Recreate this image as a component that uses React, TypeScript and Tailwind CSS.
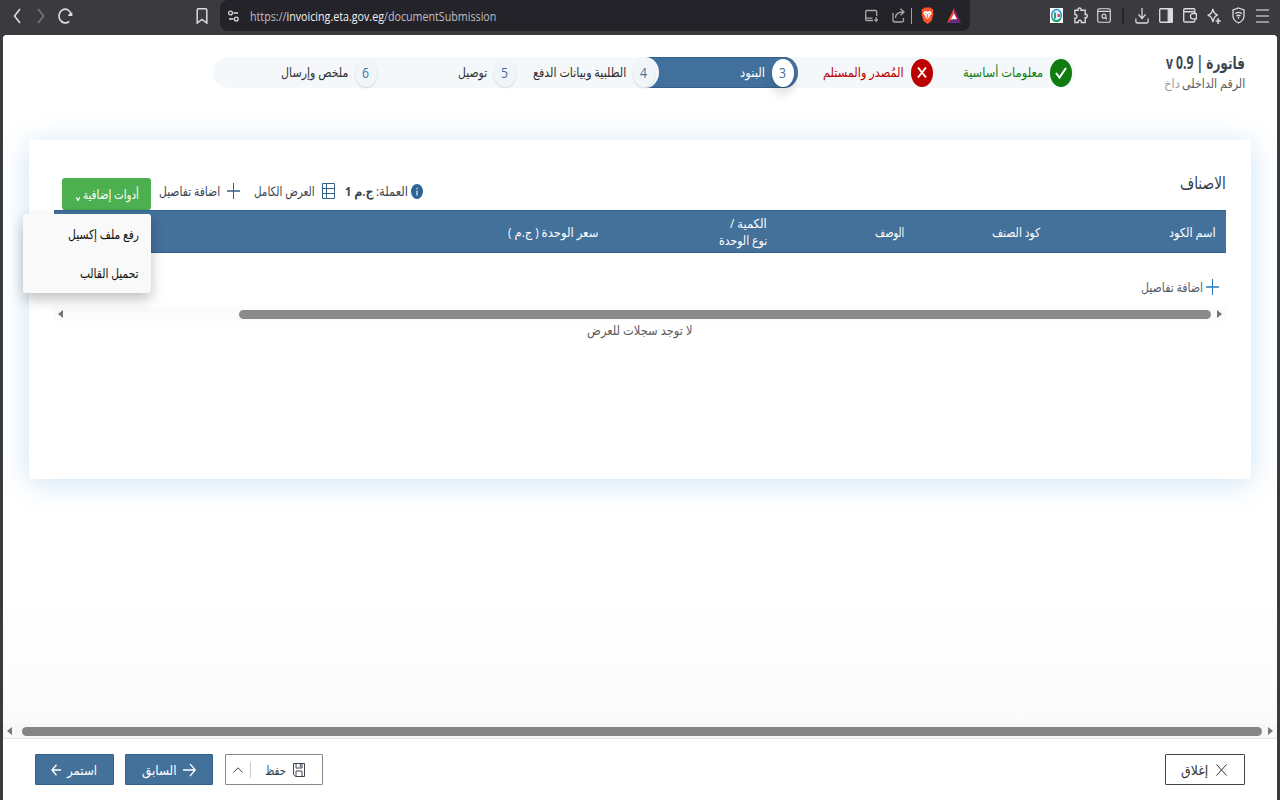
import { useLayoutEffect, useRef, useState } from "react";
import { clsx } from "clsx";

interface FitProps {
  children: React.ReactNode;
  className?: string;
}

// Text squeezed or stretched horizontally to fill the width of its box
const Fit: React.FC<FitProps> = ({ children, className }) => {
  const box = useRef<HTMLSpanElement>(null);
  const text = useRef<HTMLSpanElement>(null);
  const [scale, setScale] = useState(1);

  useLayoutEffect(() => {
    if (box.current && text.current) {
      setScale(box.current.clientWidth / text.current.offsetWidth);
    }
  }, []);

  return (
    <span ref={box} className={clsx("flex shrink-0 leading-4", className)}>
      <span
        ref={text}
        className="shrink-0 whitespace-nowrap ltr:origin-left rtl:origin-right"
        style={{ transform: `scaleX(${scale})` }}
      >
        {children}
      </span>
    </span>
  );
};

interface IconProps {
  className?: string;
  box?: string;
  children: React.ReactNode;
}

const Icon: React.FC<IconProps> = ({ className, box = "0 0 16 16", children }) => (
  <svg
    viewBox={box}
    preserveAspectRatio="none"
    fill="none"
    stroke="currentColor"
    strokeWidth={1.3}
    className={clsx("shrink-0", className)}
  >
    {children}
  </svg>
);

const Plus = ({ className }: { className: string }) => (
  <Icon className={className}>
    <path d="M8 0v16M0 8h16" />
  </Icon>
);

const Slot = ({ children }: { children: React.ReactNode }) => (
  <div className="flex w-6 shrink-0 items-center justify-center">{children}</div>
);

const BrowserBar = () => (
  <header dir="ltr" className="flex h-[35px] shrink-0 items-start bg-[#3b3a3f] pl-[5px] text-[#dcdcde]">
    <div className="flex h-[31px] w-[215px] shrink-0 items-center">
      <Slot>
        <Icon className="h-4 w-2" box="0 0 8 16"><path d="M7 1 1.500 8 7 15" strokeWidth="1.600" /></Icon>
      </Slot>
      <Slot>
        <Icon className="h-4 w-2 text-[#77767b]" box="0 0 8 16"><path d="M1 1l5.500 7L1 15" strokeWidth="1.600" /></Icon>
      </Slot>
      <Slot>
        <Icon className="h-4 w-[15px]">
          <path d="M12 13.300A6.600 6.900 0 1 1 14 6" strokeWidth="1.700" />
          <path d="M15.300 4.500v3.500h-4.500q0-3 4.500-3.500z" fill="currentColor" stroke="none" />
        </Icon>
      </Slot>
      <div className="ml-[119px]">
        <Icon className="h-4 w-3" box="0 0 12 16"><path d="M1.200 2q0-1.200 1.200-1.200h7.200q1.200 0 1.200 1.200v13L6 11.500 1.200 15z" strokeWidth="1.500" /></Icon>
      </div>
    </div>

    {/* ADDRESS */}
    <div className="flex h-[31px] w-[750px] shrink-0 items-center rounded-b-lg rounded-tl-lg bg-[#242329] pl-2">
      <Icon className="h-3 w-[11px]" box="0 0 11 12">
        <circle cx="2.500" cy="3" r="1.900" />
        <path d="M5.500 3H10M1 9h4.500" />
        <circle cx="8.300" cy="9" r="1.900" />
      </Icon>
      <Fit className="ml-[11px] w-[246px] text-[13px]">
        <span className="text-[#bfbfc4]">https://</span>
        <span className="text-[#f0f0f2]">invoicing.eta.gov.eg</span>
        <span className="text-[#bfbfc4]">/documentSubmission</span>
      </Fit>
      <div className="ml-auto flex items-center pr-[9px]">
        <Icon className="mr-[14px] h-[13px] w-[13px] text-[#a8a8ad]" box="0 0 13 13">
          <path d="M8 11.500H1.700q-1 0-1-1V2.500q0-1 1-1h9q1 0 1 1V7M1 9.200h6.500M11.200 8v4M9.500 10.500l1.700 1.700 1.700-1.700" />
        </Icon>
        <Icon className="h-[15px] w-[13px] text-[#a8a8ad]" box="0 0 13 15">
          <path d="M1 5v7q0 2 2 2h7q1.500 0 1.500-2v-2M3.500 10q0-6 8-6M8.500.8 12 4 8.500 7.300" />
        </Icon>
        <div className="mx-[6px] h-4 w-px bg-[#a0a0a5]" />
        <Icon className="ml-[3px] h-[17px] w-[13px]" box="0 0 13 17">
          <path d="M3.500.5h6L11 2l1.500.5-.5 3 .5 1-2 7.500-4 3-4-3L.5 6.500l.5-1-.5-3L2 2z" fill="#fb542b" stroke="none" />
          <path d="M3 4.500 5 4l1.500.7L8 4l2 .5.7 2L8.500 9l.3 1.500-2.300 1.700-2.300-1.700L4.500 9 2.300 6.500z" fill="#fff" stroke="none" />
          <path d="M4 6l1.500 1.200M9 6 7.500 7.200M6.500 7v3M5 10.500h3" stroke="#fb542b" strokeWidth=".8" />
        </Icon>
        <Icon className="ml-[13px] h-[15px] w-[14px]" box="0 0 14 15">
          <path d="M7 0 0 15l7-5z" fill="#ff4724" stroke="none" />
          <path d="M7 0l7 15-7-5z" fill="#9e1f63" stroke="none" />
          <path d="M0 15h14l-7-4.500z" fill="#662d91" stroke="none" />
          <path d="M7 5.300 4 11.300h6z" fill="#fff" stroke="none" />
        </Icon>
      </div>
    </div>

    {/* EXTENSIONS */}
    <div className="ml-[74px] flex h-[31px] items-center">
      <Slot>
        <Icon className="h-[15px] w-[13px]" box="0 0 13 15">
          <path d="M0 0h13v15H0z" fill="#fff" stroke="none" />
          <ellipse cx="6.500" cy="7.500" rx="4.800" ry="6" fill="#dff3ff" stroke="#2196d8" strokeWidth="1.500" />
          <path d="M2.500 11q4 4 8 0" stroke="#25a45a" strokeWidth="1.800" />
          <path d="M4 4.500h2v6H4z" fill="#3b9a63" stroke="none" />
          <path d="M7.500 6h2.500v3H7.500z" fill="#e5484d" stroke="none" />
        </Icon>
      </Slot>
      <Slot>
        <Icon className="h-[17px] w-[15px]">
          <path d="M2 3h3.500C4.500.2 9.500.2 8.500 3H13v4c3-1 3 4 0 3v4.500H9c.5-2.800-4-2.800-3.500 0H2v-4c3 .5 3-4 0-3.500z" strokeWidth="1.400" />
        </Icon>
      </Slot>
      <Slot>
        <Icon className="h-[15px] w-[14px]">
          <rect x=".8" y=".8" width="14.400" height="14.400" rx="1.500" />
          <path d="M1 3.500h14M9.700 10.300l1.800 1.800" />
          <circle cx="8" cy="8.700" r="2.200" />
        </Icon>
      </Slot>
      <div className="mx-[6px] h-4 w-[2px] bg-[#242329]" />
      <Slot>
        <Icon className="h-4 w-[14px]">
          <path d="M8 0v10M4 6.500l4 4 4-4M1 10.500V13q0 2 2 2h10q2 0 2-2v-2.500" strokeWidth="1.400" />
        </Icon>
      </Slot>
      <Slot>
        <Icon className="h-[15px] w-[14px]">
          <rect x=".8" y=".8" width="14.400" height="14.400" rx="1" strokeWidth="1.500" />
          <path d="M10.500 1H15v14h-4.500z" fill="currentColor" />
        </Icon>
      </Slot>
      <Slot>
        <Icon className="h-[15px] w-[14px]">
          <path d="M13.500 5V2q0-1.200-1.200-1.200H2Q.8.800.8 2v11.500q0 1.500 1.500 1.500h10q1.200 0 1.200-1.500v-2M1 4h10.500q2 0 2 1.500" strokeWidth="1.500" />
          <path d="M15.300 6v5.500H11q-2.500 0-2.500-2.700T11 6z" strokeWidth="1.400" />
        </Icon>
      </Slot>
      <Slot>
        <Icon className="h-4 w-[14px]">
          <path d="M6.700 1q1 5 5.500 6Q8 8 6.700 14 5.500 8 .8 7.300 5.500 6.500 6.700 1z" strokeWidth="1.400" />
          <path d="M12.700 10v6M9.800 13h6" strokeWidth="1.700" />
        </Icon>
      </Slot>
      <Slot>
        <Icon className="h-[17px] w-[13px]" box="0 0 13 17">
          <path d="M6.500 1 12 3v6q0 4.500-5.500 7Q1 13.500 1 9V3z" />
          <path d="M3.200 6.700q3.300-2.500 6.600 0M4.500 9q2-1.500 4 0M6.500 9.800v2" />
        </Icon>
      </Slot>
      <Slot>
        <Icon className="h-[14px] w-[13px] text-[#b5b5b9]" box="0 0 14 14">
          <path d="M0 1h14M0 7h14M0 13h14" strokeWidth="1.500" />
        </Icon>
      </Slot>
    </div>
  </header>
);

const StepNumber: React.FC<FitProps> = ({ children, className }) => (
  <span className={clsx("flex h-7 w-[22px] shrink-0 items-center justify-center rounded-[50%]", className)}>
    <Fit className="w-[7px] text-[14px]">{children}</Fit>
  </span>
);

const Steps = () => (
  <div className="mt-[22px] mr-[89px] flex h-[31px] w-[863px] shrink-0 rounded-full bg-[#f4f8fb] text-[13px]">
    <div className="flex w-[139px] shrink-0 items-center pr-1">
      <Icon className="h-7 w-[22px]" box="0 0 22 28">
        <ellipse cx="11" cy="14" rx="11" ry="14" fill="#107c10" stroke="none" />
        <path d="M6 14 9.500 18.500 16 9" stroke="#fff" strokeWidth="2" />
      </Icon>
      <Fit className="mr-[7px] w-20 pb-0.5 text-[#107c10]">معلومات أساسية</Fit>
    </div>
    <div className="flex w-[139px] shrink-0 items-center pr-1">
      <Icon className="h-7 w-[22px]" box="0 0 22 28">
        <ellipse cx="11" cy="14" rx="11" ry="14" fill="#ba0000" stroke="none" />
        <path d="M7 8.500l8 10M15 8.500l-8 10" stroke="#fff" strokeWidth="2" />
      </Icon>
      <Fit className="mr-[7px] w-[81px] pb-0.5 text-[#ba0000]">المُصدر والمستلم</Fit>
    </div>
    <div className="-ml-5 flex w-[159px] shrink-0 items-center rounded-r-[14px_16px] border-y border-[#33618c] bg-[#40709b] pr-1">
      <StepNumber className="bg-white text-[#40709b] shadow-[0_8px_10px_rgba(0,0,0,0.12)]">3</StepNumber>
      <Fit className="mr-[7px] w-[25px] pb-0.5 text-white">البنود</Fit>
    </div>
    <div className="relative flex w-[139px] shrink-0 items-center rounded-r-[14px_16px] bg-[#f4f8fb] pr-1">
      <StepNumber className="bg-[#f0f5fa] text-[#40709b] shadow-[0_1px_2px_rgba(0,0,0,0.14)]">4</StepNumber>
      <Fit className="mr-[7px] w-[93px] pb-0.5 text-[#323130]">الطلبية وبيانات الدفع</Fit>
    </div>
    <div className="flex w-[139px] shrink-0 items-center pr-1">
      <StepNumber className="bg-[#f0f5fa] text-[#40709b] shadow-[0_1px_2px_rgba(0,0,0,0.14)]">5</StepNumber>
      <Fit className="mr-[7px] w-[29px] pb-0.5 text-[#323130]">توصيل</Fit>
    </div>
    <div className="flex w-[139px] shrink-0 items-center pr-1">
      <StepNumber className="bg-[#f0f5fa] text-[#40709b] shadow-[0_1px_2px_rgba(0,0,0,0.14)]">6</StepNumber>
      <Fit className="mr-[7px] w-[67px] pb-0.5 text-[#323130]">ملخص وإرسال</Fit>
    </div>
  </div>
);

const Toolbar = () => (
  <div className="flex h-[70px] items-start pr-[25px] pl-[33px] text-[13px] text-[#3b4650]">
    <Fit className="mt-[35px] w-[46px] text-[17px] text-[#323b46]">الاصناف</Fit>
    <div className="mt-[35px] mr-auto flex h-8 items-center">
      <Icon className="h-[15px] w-3" box="0 0 12 15">
        <ellipse cx="6" cy="7.500" rx="6" ry="7.500" fill="#2f6496" stroke="none" />
        <path d="M6 6.500v5M6 3.800v1.400" stroke="#fff" strokeWidth="1.100" />
      </Icon>
      <Fit className="mr-[3px] w-8">العملة:</Fit>
      <Fit className="mr-[3px] w-7 font-bold">ج.م 1</Fit>
      <Icon className="mr-[10px] h-4 w-[13px] text-[#35618c]" box="0 0 13 16">
        <path d="M.5.500h12v15H.5zM.5 5.500h12M.5 10.500h12M4.500.5v15" strokeWidth="1" />
      </Icon>
      <Fit className="mr-[7px] w-[61px]">العرض الكامل</Fit>
      <Plus className="mr-[14px] h-4 w-[13px] text-[#35618c]" />
      <Fit className="mr-[7px] w-[61px]">اضافة تفاصيل</Fit>
    </div>
    <div className="relative mt-[38px] mr-2">
      <button className="flex h-8 w-[89px] items-center rounded-[3px] bg-[#4caf50] pr-3 text-[12.5px] text-white">
        <Fit className="w-14 pt-px">أدوات إضافية</Fit>
        <Icon className="mt-2.5 mr-[3px] h-1 w-1" box="0 0 4 4"><path d="M.3.300 2 3.500 3.700.3" strokeWidth="1.200" /></Icon>
      </button>
      {/* MENU */}
      <div className="absolute top-9 right-0 z-10 flex h-[79px] w-32 flex-col rounded-[3px] bg-[#f9f9f9] pr-3 text-[13px] text-[#111] shadow-[0_6px_14px_rgba(0,0,0,0.25)]">
        <Fit className="mt-3 h-[39px] w-[71px]">رفع ملف إكسيل</Fit>
        <Fit className="w-[59px]">تحميل القالب</Fit>
      </div>
    </div>
  </div>
);

const ItemsTable = () => (
  <div className="mr-[25px] ml-[25px]">
    <div className="flex h-[43px] items-center border-y border-[#33618c] bg-[#43719a] pt-0.5 text-[12.5px] text-white">
      <div className="w-[176px] pr-[10px]"><Fit className="w-[47px]">اسم الكود</Fit></div>
      <div className="w-[136px] pr-[10px]"><Fit className="w-12">كود الصنف</Fit></div>
      <div className="w-[137px] pr-[10px]"><Fit className="w-[29px]">الوصف</Fit></div>
      <div className="w-[169px] pr-[10px]">
        <Fit className="h-[17px] w-[37px]">الكمية /</Fit>
        <Fit className="w-12">نوع الوحدة</Fit>
      </div>
      <div className="pr-[10px]"><Fit className="w-[90px]">سعر الوحدة ( ج.م )</Fit></div>
    </div>
    <div className="flex h-[54px] items-center pt-[14px] pr-[7px] text-[13px] text-[#55606b]">
      <Plus className="h-4 w-[13px] text-[#2b7cc0]" />
      <Fit className="mr-[3px] w-[62px]">اضافة تفاصيل</Fit>
    </div>
    <div className="flex h-[14px] items-center bg-[#fbfbfb] pr-1 pl-1">
      <Icon className="h-2 w-[5px] text-[#777]" box="0 0 5 8"><path d="M0 0l5 4-5 4z" fill="currentColor" stroke="none" /></Icon>
      <div className="mr-[6px] h-[9px] w-[972px] rounded-full bg-[#8a8a8a]" />
      <Icon className="mr-auto h-2 w-[5px] text-[#777]" box="0 0 5 8"><path d="M5 0 0 4l5 4z" fill="currentColor" stroke="none" /></Icon>
    </div>
    <div className="flex justify-center pt-px text-[13px] text-[#605e5c]">
      <Fit className="w-[105px]">لا توجد سجلات للعرض</Fit>
    </div>
  </div>
);

const Footer = () => (
  <footer className="flex h-[61px] shrink-0 items-start bg-white pt-[15px] pr-8 pl-8 text-[13px]">
    <button className="flex h-[31px] w-20 items-center rounded-[1px] border border-[#444] pr-[17px] text-[#323130]">
      <Icon className="h-3 w-[11px]" box="0 0 11 12"><path d="M.5.500l10 11M10.500.5l-10 11" strokeWidth="1" /></Icon>
      <Fit className="mr-2 w-[27px]">إغلاق</Fit>
    </button>
    <button className="mr-auto flex h-[31px] w-[98px] items-center rounded-[1px] border border-[#8a8886] pr-[17px] text-[#3b4650]">
      <Icon className="h-[14px] w-3" box="0 0 12 14">
        <path d="M.5.500h11v13h-9l-2-2zM3 .5v4.500h6V.5M3 13.500V8h6v5.500M7.300 1v3" strokeWidth="1" />
      </Icon>
      <Fit className="mr-[7px] w-[21px]">حفظ</Fit>
      <div className="mr-[14px] h-4 w-px bg-[#c8c8c8]" />
      <Icon className="mr-[7px] h-[6px] w-[10px]" box="0 0 10 6"><path d="M.5 5.500 5 .8l4.500 4.700" strokeWidth="1" /></Icon>
    </button>
    <button className="mr-3 flex h-[31px] w-[88px] items-center rounded-[1px] border border-[#33618c] bg-[#43719a] pr-4 text-white">
      <Icon className="h-[14px] w-[13px]" box="0 0 13 14"><path d="M0 7h12M7 .8 12.200 7 7 13.200" /></Icon>
      <Fit className="mr-[6px] w-[35px]">السابق</Fit>
    </button>
    <button className="mr-[11px] flex h-[31px] w-[79px] items-center rounded-[1px] border border-[#33618c] bg-[#43719a] pr-4 text-white">
      <Fit className="w-[30px]">استمر</Fit>
      <Icon className="mr-[6px] h-3 w-[10px]" box="0 0 10 12"><path d="M10 6H1M5.500.8 1 6l4.500 5.200" /></Icon>
    </button>
  </footer>
);

export default function App() {
  return (
    <div className="flex h-[800px] w-[1280px] flex-col overflow-hidden bg-[#3b3a3f] font-['Open_Sans','DejaVu_Sans',sans-serif]">
      <BrowserBar />
      <div dir="rtl" className="mx-[3px] flex flex-1 flex-col overflow-hidden rounded-t-[4px] bg-white">
        <div className="flex flex-1 flex-col bg-linear-to-b from-white from-80% to-[#fafafa]">
          {/* HEADING */}
          <div className="flex h-[105px] shrink-0 items-start pr-8">
            <div className="mt-5 w-20">
              <Fit className="w-[79px] text-[17px] font-bold text-[#3b4650]">فاتورة | 0.9 v</Fit>
              <div className="mt-[5px] flex">
                <Fit className="w-[63px] text-[12.5px] text-[#605e5c]">الرقم الداخلى</Fit>
                <Fit className="mr-0.5 w-4 text-[12.5px] text-[#a0a0a0]">داخ</Fit>
              </div>
            </div>
            <Steps />
          </div>

          {/* ITEMS */}
          <div className="mx-[26px] h-[339px] shrink-0 bg-white shadow-[0_4px_28px_rgba(0,120,212,0.2)]">
            <Toolbar />
            <ItemsTable />
          </div>

          <div className="mt-auto flex h-4 items-center border-b border-[#e5e5e5] bg-[#f7f7f7] pt-px pr-1 pl-1">
            <Icon className="h-2 w-[5px] text-[#777]" box="0 0 5 8"><path d="M0 0l5 4-5 4z" fill="currentColor" stroke="none" /></Icon>
            <div className="mr-[6px] h-[9px] w-[1240px] rounded-full bg-[#858585]" />
            <Icon className="mr-auto h-2 w-[5px] text-[#777]" box="0 0 5 8"><path d="M5 0 0 4l5 4z" fill="currentColor" stroke="none" /></Icon>
          </div>
        </div>
        <Footer />
      </div>
    </div>
  );
}
